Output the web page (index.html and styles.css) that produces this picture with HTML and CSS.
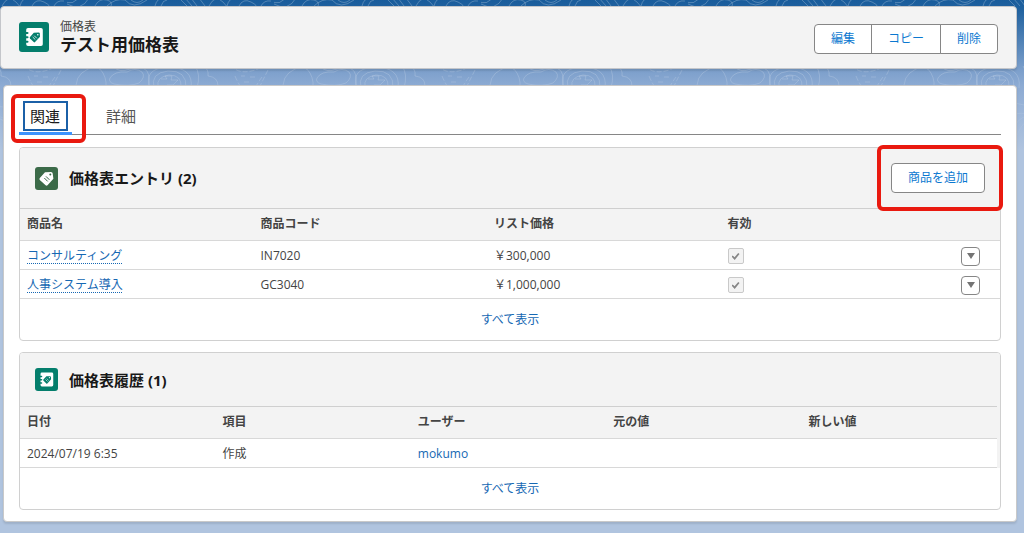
FILE: index.html
```html
<!DOCTYPE html>
<html lang="ja">
<head>
<meta charset="utf-8">
<title>テスト用価格表</title>
<link rel="stylesheet" href="styles.css">
</head>
<body>
<svg class="backdrop" aria-hidden="true">
  <defs>
    <pattern id="contours" x="67" y="0" width="207" height="150" patternUnits="userSpaceOnUse">
      <g fill="none" stroke="#fff" stroke-opacity=".24" stroke-width="1">
        <path d="M-4 0q10 8 18-6M0 4q14 8 22-6M28 6q4-8 12-6 6 2 4 6M40 6q8-8 18-6M58 0q8 10 22 0M64 0q6 5 12 0M88 6q2-8 8-8M94 6q2-6 6-6M112-2l8 8M118-2l7 8M124-2l6 8M132-2l6 8M142 6q6-12 14-4t-2 6M160 6q2-8 8-8M172 6q4-8 12-4 8 4 4 6M194 6q3-6 10-5"/>
        <path d="M87 88q-4-15 14-17 19-1 18 17M91 87q-2-10 11-12 13 0 12 12M94 79h6l-2-3h7l-1 4h7l-5 5h-6M83 88q-7-19 17-21 27 0 24 21M128 66q6 8 2 22M136 66q6 3 5 10 10 1 10 10"/>
        <path d="M10 92q-4-16 11-23 10-5 15 4 5 9 2 19M43 78q4-7 17-6 8-5 15 0 4 5-3 11-10 4-25 1-6-2-4-6M47 67q5 6 16 2 10-5 17 2 4 7 1 18"/>
        <path d="M163 66q10 8 21 5 11-2 12-8M170 66q9 4 18-1M168 76q5 12 12 18M174 76h4M183 77h5M177 82h7M195 77q-6 8-9 16M201 70q-6 12-11 22" stroke-dasharray="5 2"/>
        <path d="M-8 106q20-24 44-4t38 6 34-8 45 8 38-10 26 8M4 122q18-20 34-4t36 8 42-12 38 12 46-5M118 130q8-20 24-10t8 20M140 20q10 15-4 28t3 18M154 20q12 16 0 28t4 18M168 22q12 20 0 38M106 30q20 18 5 38M92 38q14 14 2 24M122 135q12-28 30-8M20 140q16-22 34 0"/>
      </g>
    </pattern>
    <linearGradient id="fade" x1="0" y1="0" x2="0" y2="1">
      <stop offset=".3" stop-color="#fff"/><stop offset="1" stop-color="#000"/>
    </linearGradient>
    <mask id="fade-mask"><rect width="100%" height="150" fill="url(#fade)"/></mask>
    <symbol id="pricebook" viewBox="0 0 30 30">
      <path fill="#fff" d="M9 6h13a1.800 1.800 0 0 1 1.800 1.800v14.400a1.800 1.800 0 0 1-1.800 1.800H9a1.800 1.800 0 0 1-1.800-1.800v-1.500h1.300a1 1 0 0 0 0-2H7.200V16.300h1.300a1 1 0 0 0 0-2H7.200V12h1.300a1 1 0 0 0 0-2H7.200V7.800A1.800 1.800 0 0 1 9 6z"/>
      <path fill="#047e6c" d="M14.800 10.800l4.800-.2q1.100 0 1.200 1l.2 3.200-4.900 5.300q-.7.600-1.400 0l-3.700-3.700q-.6-.7 0-1.400z"/>
      <circle cx="18.800" cy="12.700" r=".8" fill="#fff"/>
      <path d="M13.700 15l2.600 2.600M15.200 13.700l2.600 2.600" stroke="#fff" stroke-width=".8"/>
    </symbol>
    <symbol id="tag" viewBox="0 0 23 23">
      <path fill="#fff" d="M10 5.300l6-.3q1.600 0 1.700 1.500l.7 5.200-5.900 6.500q-.9.900-1.900 0l-5.800-5.300q-.8-.9 0-1.800z"/>
      <circle cx="15.300" cy="7.600" r="1" fill="#3b6a48"/>
      <path d="M9.300 11l3.400 3.400M11 9.400l3.400 3.400" stroke="#3b6a48" stroke-width="1"/>
    </symbol>
  </defs>
  <rect width="100%" height="150" fill="url(#contours)" mask="url(#fade-mask)"/>
</svg>

<header class="page-header">
  <svg class="icon icon-large icon-teal" aria-hidden="true"><use href="#pricebook"/></svg>
  <div class="page-name">
    <p class="page-type">価格表</p>
    <h1 class="page-title">テスト用価格表</h1>
  </div>
  <div class="button-group">
    <button class="button" type="button">編集</button>
    <button class="button" type="button">コピー</button>
    <button class="button" type="button">削除</button>
  </div>
</header>

<main class="record">
  <nav class="tabs">
    <a class="tab tab-active" href="#related"><span class="tab-label">関連</span><span class="callout callout-tab"></span></a>
    <a class="tab" href="#detail"><span class="tab-label">詳細</span></a>
  </nav>

  <section class="card" id="related">
    <div class="card-header">
      <svg class="icon icon-green" aria-hidden="true"><use href="#tag"/></svg>
      <h2 class="card-title">価格表エントリ (2)</h2>
      <div class="card-action">
        <button class="button button-single" type="button">商品を追加</button>
        <span class="callout callout-action"></span>
      </div>
    </div>
    <table class="grid">
      <colgroup><col><col><col><col><col class="col-menu"></colgroup>
      <thead>
        <tr><th>商品名</th><th>商品コード</th><th>リスト価格</th><th>有効</th><th></th></tr>
      </thead>
      <tbody>
        <tr>
          <td><a class="link link-dotted" href="#consulting">コンサルティング</a></td>
          <td>IN7020</td>
          <td>￥300,000</td>
          <td><input class="check" type="checkbox" aria-label="有効" checked disabled></td>
          <td><button class="menu-button" type="button" aria-label="アクションを表示"><svg class="caret" viewBox="0 0 8 6"><path d="M0 0h8L4 6z"/></svg></button></td>
        </tr>
        <tr>
          <td><a class="link link-dotted" href="#hr-system">人事システム導入</a></td>
          <td>GC3040</td>
          <td>￥1,000,000</td>
          <td><input class="check" type="checkbox" aria-label="有効" checked disabled></td>
          <td><button class="menu-button" type="button" aria-label="アクションを表示"><svg class="caret" viewBox="0 0 8 6"><path d="M0 0h8L4 6z"/></svg></button></td>
        </tr>
      </tbody>
    </table>
    <footer class="card-footer"><a class="link" href="#all-entries">すべて表示</a></footer>
  </section>

  <section class="card">
    <div class="card-header">
      <svg class="icon icon-teal" aria-hidden="true"><use href="#pricebook"/></svg>
      <h2 class="card-title">価格表履歴 (1)</h2>
    </div>
    <div class="grid-gutter">
      <table class="grid">
        <thead>
          <tr><th>日付</th><th>項目</th><th>ユーザー</th><th>元の値</th><th>新しい値</th></tr>
        </thead>
        <tbody>
          <tr><td>2024/07/19 6:35</td><td>作成</td><td><a class="link" href="#mokumo">mokumo</a></td><td></td><td></td></tr>
        </tbody>
      </table>
    </div>
    <footer class="card-footer"><a class="link" href="#all-history">すべて表示</a></footer>
  </section>
</main>
</body>
</html>
```

FILE: styles.css
```css
* {
  box-sizing: border-box;
}

body {
  margin: 0;
  padding: 6px 7px 11px 0;
  background: #b0c4df linear-gradient(#195c9b 0, #1f619f 8px, #7c9fcb 70px, #8dabd3 86px, #b0c4df 150px) no-repeat;
  color: #444;
  font: 12px/18px "Open Sans", "Noto Sans CJK JP", sans-serif;
}

h1,
h2,
p {
  margin: 0;
}

.backdrop {
  position: absolute;
  top: 0;
  left: 0;
  width: 100%;
  height: 150px;
}

.icon {
  flex: none;
  width: 23px;
  height: 23px;
  border-radius: 3px;
}

.icon-large {
  width: 30px;
  height: 30px;
}

.icon-teal {
  background: #047e6c;
}

.icon-green {
  background: #3b6a48;
}

.page-header {
  position: relative;
  display: flex;
  align-items: center;
  gap: 11px;
  padding: 12px 18px 13px;
  border: 1px solid #c4c6ca;
  border-radius: 4px;
  background: #f3f3f3;
  box-shadow: 0 2px 2px rgba(0, 0, 0, 0.1);
}

.page-type {
  line-height: 16px;
}

.page-title {
  color: #181818;
  font-size: 17px;
  line-height: 20px;
}

.button-group {
  display: flex;
  margin-left: auto;
  padding-top: 3px;
}

.button {
  height: 30px;
  margin: 0;
  padding: 0 16px;
  border: 1px solid #868686;
  background: #fff;
  color: #0b78d0;
  font: inherit;
}

.button + .button {
  margin-left: -1px;
}

.button:first-child {
  border-radius: 4px 0 0 4px;
}

.button:last-child {
  border-radius: 0 4px 4px 0;
}

.button.button-single {
  border-radius: 4px;
}

.record {
  position: relative;
  margin: 16px 0 0 3px;
  padding: 15px 15px 11px;
  border: 1px solid #c9c9c9;
  border-radius: 4px;
  background: #fff;
  box-shadow: 0 2px 2px rgba(0, 0, 0, 0.1);
}

.tabs {
  display: flex;
  gap: 23px;
  margin-bottom: 12px;
  border-bottom: 1px solid #868686;
}

.tab {
  position: relative;
  margin-bottom: -1px;
  padding: 0 4px 1px;
  border-bottom: 3px solid transparent;
  color: #555;
  font-size: 15px;
  text-decoration: none;
}

.tab-active {
  border-color: #3d93fd;
  color: #181818;
}

.tab-label {
  display: block;
  padding: 0 6px 0 5px;
  border: 2px solid transparent;
  line-height: 26px;
}

.tab-active .tab-label {
  border-color: #1b60a7;
}

.callout {
  position: absolute;
  border: 4px solid #e9190f;
  border-radius: 6px;
  pointer-events: none;
}

.callout-tab {
  inset: -7px -14px -11px -8px;
}

.callout-action {
  inset: -18px -18px -18px -14px;
}

.card {
  border: 1px solid #d0d0d0;
  border-radius: 4px;
}

.card + .card {
  margin-top: 11px;
}

.card-header {
  display: flex;
  align-items: center;
  gap: 11px;
  padding: 15px;
  border-radius: 3px 3px 0 0;
  background: #f3f3f3;
}

.card-title {
  color: #181818;
  font-size: 15px;
  line-height: 20px;
}

.card-action {
  position: relative;
  z-index: 1;
  display: flex;
  margin-left: auto;
}

.grid {
  width: 100%;
  border-spacing: 0;
  table-layout: fixed;
  background: #fff;
}

.grid-gutter {
  padding-right: 3px;
  background: #f3f3f3;
}

.col-menu {
  width: 46px;
}

.grid th,
.grid td {
  padding: 0 7px;
  border-bottom: 1px solid #d8d8d8;
  text-align: left;
}

.grid th {
  height: 33px;
  padding-bottom: 2px;
  border-top: 1px solid #cfcfcf;
  background: #f3f3f3;
}

.grid td {
  height: 29px;
  padding-top: 2px;
}

.link {
  color: #1668b3;
  text-decoration: none;
}

.link-dotted {
  text-decoration: underline dotted 1px;
  text-underline-offset: 3px;
}

.check {
  display: block;
  width: 16px;
  height: 16px;
  margin: 0;
  border: 1px solid #c9c9c9;
  border-radius: 2px;
  background: #f3f3f3;
  appearance: none;
}

.check::before {
  display: block;
  width: 8px;
  height: 7px;
  margin: 4px 3px;
  background: #868686;
  clip-path: polygon(0 50%, 16% 34%, 38% 60%, 84% 0, 100% 14%, 40% 100%);
  content: "";
}

.menu-button {
  display: flex;
  align-items: center;
  justify-content: center;
  width: 19px;
  height: 19px;
  padding: 0;
  border: 1px solid #868686;
  border-radius: 4px;
  background: #fff;
}

.caret {
  width: 8px;
  height: 6px;
  fill: #747474;
}

.card-footer {
  padding: 12px 0 11px;
  text-align: center;
}
```
